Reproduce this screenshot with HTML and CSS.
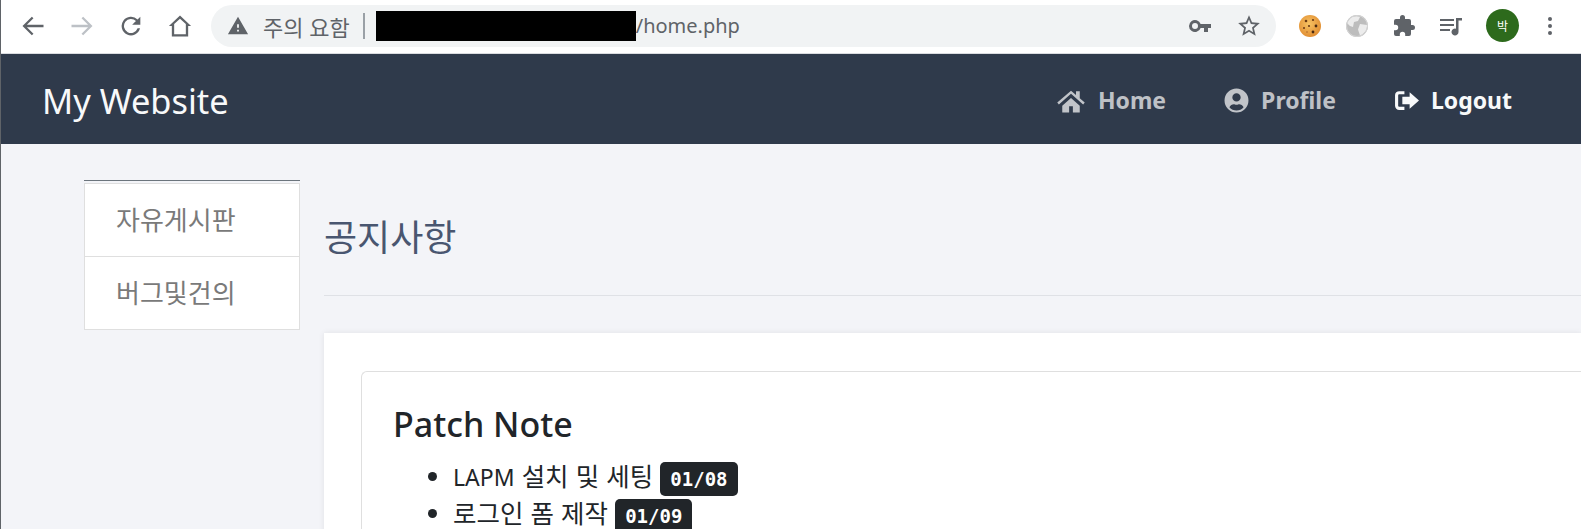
FILE: index.html
```html
<!DOCTYPE html>
<html lang="ko">
<head>
    <meta charset="UTF-8">
    <meta name="viewport" content="width=device-width, initial-scale=1.0">
    <title>My Website</title>
    <link rel="stylesheet" href="styles.css">
</head>
<body>
    <div class="toolbar">
        <svg class="tool" viewBox="0 0 24 24"><path d="M21 11H6.800l5.600-5.600L11 4l-8 8 8 8 1.400-1.400L6.800 13H21z" fill="#5f6368"/></svg>
        <svg class="tool" viewBox="0 0 24 24"><path d="M3 11h14.200l-5.600-5.600L13 4l8 8-8 8-1.400-1.400 5.600-5.600H3z" fill="#bdc1c6"/></svg>
        <svg class="tool" viewBox="0 0 24 24"><path d="M17.650 6.350A8 8 0 1 0 19.730 14h-2.080a6 6 0 1 1-1.410-6.240L13 11h7V4z" fill="#5f6368"/></svg>
        <svg class="tool" viewBox="0 0 24 24"><path d="M12 3 2.500 12H5v9h14v-9h2.500zm5 16H7v-8.800l5-4.500 5 4.500z" fill="#5f6368"/></svg>
        <div class="omnibox">
            <svg class="warn" viewBox="0 0 24 24"><path d="M1 21h22L12 2zm12-3h-2v-2h2zm0-4h-2v-4h2z" fill="#5f6368"/></svg>
            <span class="warn-text">주의 요함</span>
            <span class="divider"></span>
            <span class="redact"></span>
            <span class="url">/home.php</span>
            <svg class="omni-icon key" viewBox="0 0 24 24"><path d="M12.650 10A6 6 0 1 0 12.650 14H16v4h4v-4h3v-4zM7 15a3 3 0 1 1 0-6 3 3 0 0 1 0 6z" fill="#5f6368"/></svg>
            <svg class="omni-icon star" viewBox="0 0 24 24"><path d="m22 9.240-7.190-.62L12 2 9.190 8.630 2 9.240l5.460 4.730L5.820 21 12 17.270 18.180 21l-1.630-7.030zM12 15.400l-3.760 2.270 1-4.280-3.320-2.880 4.380-.38L12 6.100l1.710 4.040 4.380.38-3.320 2.880 1 4.280z" fill="#5f6368"/></svg>
        </div>
        <div class="extensions">
            <svg class="ext" viewBox="0 0 24 24">
                <defs><radialGradient id="dough" cx="45%" cy="40%" r="65%"><stop offset="0" stop-color="#f6c263"/><stop offset="1" stop-color="#e08a2e"/></radialGradient></defs>
                <circle cx="12" cy="12" r="11" fill="url(#dough)"/>
                <circle cx="8" cy="7" r="1.300" fill="#6b3a14"/><circle cx="15" cy="6" r="1.100" fill="#6b3a14"/><circle cx="18" cy="12" r="1.400" fill="#4a2a10"/><circle cx="11" cy="12" r="1.100" fill="#6b3a14"/><circle cx="15" cy="18" r="1.400" fill="#4a2a10"/><circle cx="6" cy="14" r="1" fill="#6b3a14"/><circle cx="9" cy="18" r=".8" fill="#a9622a"/>
            </svg>
            <svg class="ext" viewBox="0 0 24 24">
                <circle cx="12" cy="12" r="11" fill="#bdbdbd"/>
                <path d="M5 4.500c3-2.500 7-3 10-1.500l-2 4-4 1-1 5-3-1-3-3zM15 10l7 1c.5 4-2.500 9-7 10.500l-2-6z" fill="#ececec"/>
                <circle cx="12" cy="12" r="10.500" fill="none" stroke="#d6d6d6"/>
            </svg>
            <svg class="ext puzzle" viewBox="0 0 24 24"><path d="M20.500 11H19V7a2 2 0 0 0-2-2h-4V3.500a2.500 2.500 0 0 0-5 0V5H4a2 2 0 0 0-2 2v3.800h1.500a2.700 2.700 0 0 1 0 5.400H2V20a2 2 0 0 0 2 2h3.800v-1.500a2.700 2.700 0 0 1 5.400 0V22H17a2 2 0 0 0 2-2v-4h1.500a2.500 2.500 0 0 0 0-5z" fill="#5f6368"/></svg>
            <svg class="ext queue" viewBox="0 0 24 24"><path d="M1 5h14v2H1zm0 5h14v2H1zm0 5h10v2H1zM17 4h6v2.500h-3.500V18a3.500 3.500 0 1 1-2.500-3.350z" fill="#5f6368"/></svg>
            <span class="avatar">박</span>
            <svg class="ext menu" viewBox="0 0 24 24"><circle cx="12" cy="5" r="2" fill="#5f6368"/><circle cx="12" cy="12" r="2" fill="#5f6368"/><circle cx="12" cy="19" r="2" fill="#5f6368"/></svg>
        </div>
    </div>

    <nav class="navbar">
        <a class="brand">My Website</a>
        <ul class="nav-links">
            <li class="nav-item">
                <svg class="nav-icon nav-icon-wide" viewBox="0 0 24 24"><path d="M12 4.500 1 14l1.300 1.500L12 7l9.700 8.500L23 14l-4-3.500V5h-3v2.900zM5 16.500V22h5.500v-5h3v5H19v-5.500L12 10.400z" fill="currentColor"/></svg>
                Home
            </li>
            <li class="nav-item">
                <svg class="nav-icon" viewBox="0 0 24 24"><path d="M12 .5a11.500 11.500 0 1 0 0 23 11.500 11.500 0 0 0 0-23zm0 4.500a4 4 0 1 1 0 8 4 4 0 0 1 0-8zm0 16.500a9 9 0 0 1-6.800-3.100c.8-1.800 2.500-2.900 4.300-2.900.5 0 1.400.5 2.500.5s2-.5 2.500-.5c1.800 0 3.500 1.100 4.300 2.900a9 9 0 0 1-6.800 3.100z" fill="currentColor"/></svg>
                Profile
            </li>
            <li class="nav-item active">
                <svg class="nav-icon" viewBox="0 0 24 24"><path d="M10 3H5a4 4 0 0 0-4 4v10a4 4 0 0 0 4 4h5v-3H5a1 1 0 0 1-1-1V7a1 1 0 0 1 1-1h5zM15 4v4.500H8v7h7V20l9-8z" fill="currentColor"/></svg>
                Logout
            </li>
        </ul>
    </nav>

    <div class="layout">
        <aside class="sidebar">
            <a class="side-link">자유게시판</a>
            <a class="side-link">버그및건의</a>
        </aside>
        <main class="content">
            <h3 class="page-title">공지사항</h3>
            <hr class="rule">
            <section class="panel">
                <div class="card">
                    <h4 class="card-title">Patch Note</h4>
                    <ul class="notes">
                        <li><span class="latin">LAPM</span> 설치 및 세팅 <span class="badge">01/08</span></li>
                        <li>로그인 폼 제작 <span class="badge">01/09</span></li>
                    </ul>
                </div>
            </section>
        </main>
    </div>
</body>
</html>
```

FILE: styles.css
```css
html, body {
    height: 100%;
}
body {
    margin: 0;
    overflow: hidden;
    background: #f3f4f8;
    font-family: "Noto Sans", "Noto Sans CJK KR", sans-serif;
    border-left: 1px solid #5f6368;
}

/* browser toolbar */
.toolbar {
    height: 54px;
    box-sizing: border-box;
    background: #fff;
    border-bottom: 1px solid #dadce0;
    display: flex;
    align-items: center;
    padding: 0 0 2px 18px;
}
.tool {
    width: 28px;
    height: 28px;
    margin-right: 21px;
    flex: none;
}
.omnibox {
    flex: none;
    width: 1065px;
    height: 42px;
    margin-left: -4px;
    box-sizing: border-box;
    border-radius: 21px;
    background: #f1f3f4;
    display: flex;
    align-items: center;
    padding: 0 14px 0 16px;
    font-size: 20px;
    color: #5f6368;
}
.warn {
    width: 22px;
    height: 22px;
    margin-right: 14px;
}
.warn-text {
    font-size: 22px;
}
.divider {
    width: 2px;
    height: 26px;
    background: #9aa0a6;
    margin: 0 11px 0 13px;
}
.redact {
    width: 260px;
    height: 30px;
    background: #000;
}
.url {
    flex: 1;
}
.omni-icon {
    width: 24px;
    height: 24px;
}
.star {
    width: 26px;
    height: 26px;
}
.key {
    margin-right: 24px;
}
.extensions {
    display: flex;
    align-items: center;
    margin-left: 22px;
}
.ext {
    width: 24px;
    height: 24px;
    margin-right: 23px;
}
.avatar {
    width: 33px;
    height: 33px;
    border-radius: 50%;
    background: #2d6a1c;
    color: #fff;
    font-size: 12px;
    display: flex;
    align-items: center;
    justify-content: center;
    margin-right: 19px;
}

/* site navbar */
.navbar {
    height: 90px;
    box-sizing: border-box;
    background: #2f3a4b;
    display: flex;
    align-items: center;
    justify-content: space-between;
    padding: 2px 69px 0 41px;
}
.brand {
    font-size: 34.4px;
    color: #f8f9fa;
}
.nav-links {
    list-style: none;
    margin: 0;
    padding: 0;
    display: flex;
    gap: 58px;
}
.nav-item {
    display: flex;
    align-items: center;
    gap: 12px;
    font-size: 23px;
    font-weight: 700;
    color: rgba(255, 255, 255, 0.7);
}
.nav-item.active {
    color: #f8f9fa;
}
.nav-icon {
    width: 25px;
    height: 25px;
}
.nav-icon-wide {
    width: 30px;
    height: 30px;
}

/* page */
.layout {
    display: flex;
    align-items: flex-start;
    padding-left: 83px;
}
.sidebar {
    width: 216px;
    margin-top: 36px;
    border-top: 1px solid #6c757d;
    padding-top: 2px;
    flex: none;
    display: flex;
    flex-direction: column;
}
.side-link {
    height: 74px;
    box-sizing: border-box;
    background: #fff;
    border: 1px solid #dfdfdf;
    color: #7a7a7a;
    font-size: 26px;
    display: flex;
    align-items: center;
    padding: 0 0 2px 31px;
}
.side-link + .side-link {
    margin-top: -1px;
}
.content {
    flex: 1;
    margin-left: 24px;
}
.page-title {
    margin: 0;
    padding-top: 74px;
    font-size: 36px;
    font-weight: 400;
    line-height: 40px;
    color: #495670;
}
.rule {
    margin: 37px 0;
    border: 0;
    border-top: 1px solid #dfe1e6;
}
.panel {
    background: #fff;
    padding: 38px 0 37px 37px;
    box-shadow: 0 0 6px rgba(0, 0, 0, 0.08);
    height: 400px;
}
.card {
    border: 1px solid #dfdfdf;
    border-right: 0;
    border-radius: 6px 0 0 6px;
    padding: 32px 31px;
}
.card-title {
    margin: 0 0 14px;
    font-size: 34px;
    font-weight: 500;
    line-height: 40px;
    color: #212529;
}
.notes {
    margin: 0;
    padding-left: 60px;
    font-size: 25.5px;
    word-spacing: 0.5px;
    line-height: 37px;
    color: #212529;
}
.notes li {
    height: 37px;
}
.latin {
    font-size: 23px;
}
.badge {
    display: inline-block;
    font-family: "DejaVu Sans Mono", "Liberation Mono", monospace;
    font-size: 19px;
    font-weight: 700;
    line-height: 34px;
    padding: 0 10px;
    background: #212529;
    color: #fff;
    border-radius: 5px;
    vertical-align: middle;
}
```
